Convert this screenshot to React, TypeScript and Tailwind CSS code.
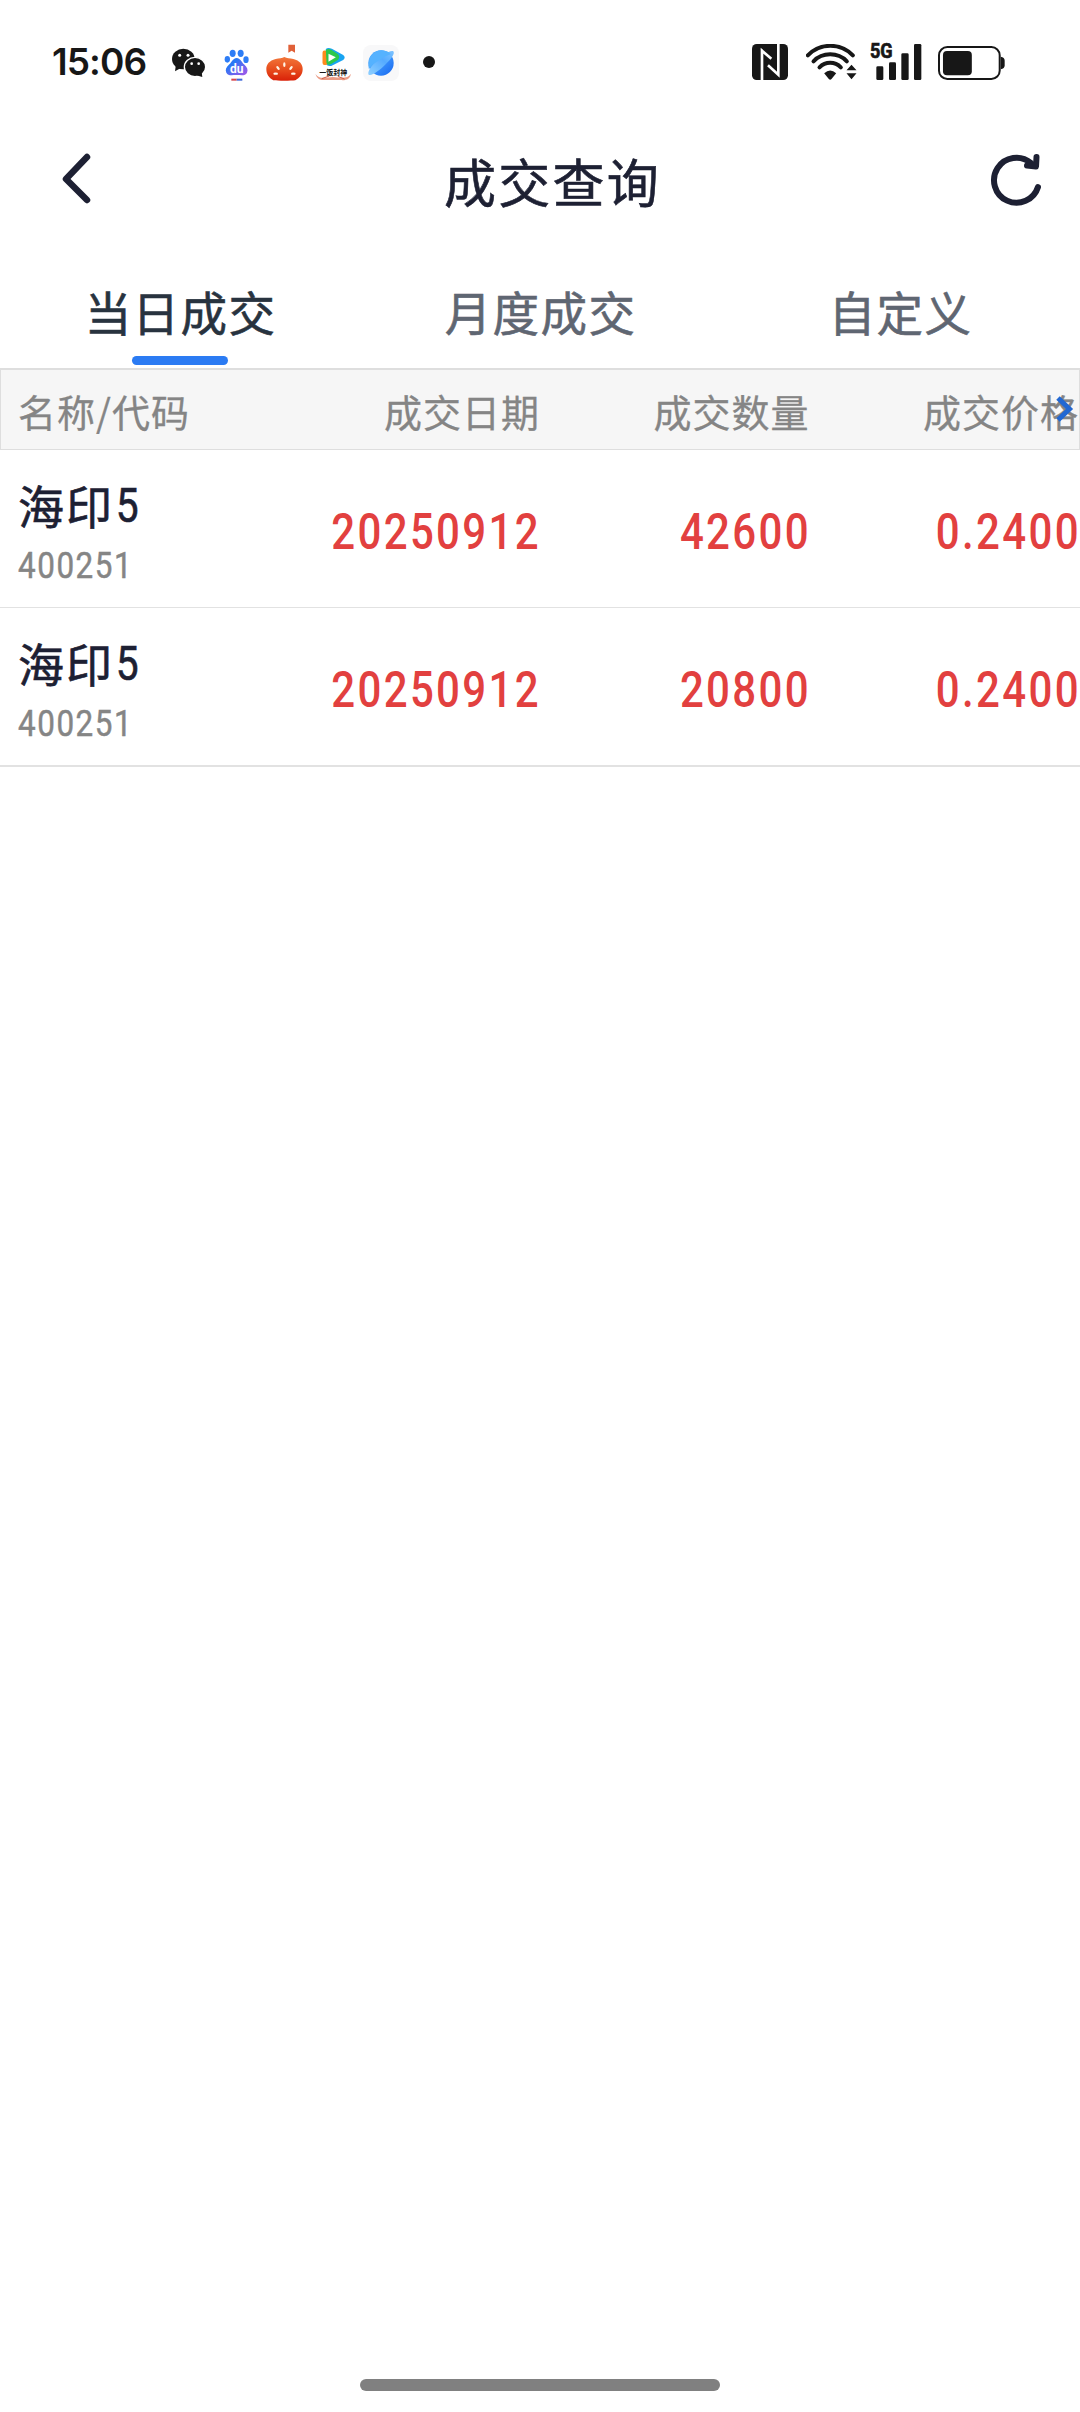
const trades = [
  { name: "海印", suffix: "5", code: "400251", date: "20250912", amount: "42600", price: "0.2400" },
  { name: "海印", suffix: "5", code: "400251", date: "20250912", amount: "20800", price: "0.2400" },
];

const tabs = ["当日成交", "月度成交", "自定义"];

function WechatIcon() {
  return (
    <svg viewBox="0 0 102 114" className="h-[38px] w-[34px]">
      <path d="M12 60L9 82L28 71Z" fill="#171717" />
      <ellipse cx="34" cy="45" rx="34" ry="31" fill="#171717" />
      <circle cx="23" cy="34" r="4.5" fill="#fff" />
      <circle cx="48" cy="34" r="4.5" fill="#fff" />
      <ellipse cx="69" cy="69" rx="32" ry="29" fill="#171717" stroke="#fff" strokeWidth="4" />
      <path d="M73 94L91 99L89 84Z" fill="#171717" />
      <circle cx="59" cy="59" r="4" fill="#fff" />
      <circle cx="80" cy="59" r="4" fill="#fff" />
    </svg>
  );
}

function BaiduIcon() {
  return (
    <svg viewBox="0 0 75 114" className="h-[38px] w-[25px]">
      <defs>
        <linearGradient id="paw" x1="0" y1="0" x2="1" y2="1">
          <stop offset="0.3" stopColor="#2878f5" />
          <stop offset="1" stopColor="#a855e8" />
        </linearGradient>
      </defs>
      <ellipse cx="10" cy="46" rx="8" ry="10" fill="#2d7df6" />
      <ellipse cx="26" cy="28" rx="9" ry="11" fill="#2d7df6" />
      <ellipse cx="50" cy="28" rx="9" ry="11" fill="#2d7df6" />
      <ellipse cx="66" cy="47" rx="8" ry="10" fill="#2d7df6" />
      <path
        d="M38 42C49 42 52 54 60 61C70 70 73 78 69 86C64 96 54 93 38 93C22 93 12 96 7 86C3 78 6 70 16 61C24 54 27 42 38 42Z"
        fill="url(#paw)"
      />
      <text x="38" y="86" textAnchor="middle" fontSize="36" fontWeight="700" fill="#fff" className="font-[Roboto]">
        du
      </text>
      <path d="M22 107H38" stroke="#d8464c" strokeWidth="6" />
      <path d="M38 107H55" stroke="#3d66d8" strokeWidth="6" />
    </svg>
  );
}

function TomatoIcon() {
  return (
    <svg viewBox="0 0 111 114" className="h-[38px] w-[37px]">
      <defs>
        <linearGradient id="fruit" x1="0" y1="0" x2="0" y2="1">
          <stop offset="0" stopColor="#f2763a" />
          <stop offset="0.5" stopColor="#e84f1e" />
          <stop offset="1" stopColor="#d92008" />
        </linearGradient>
      </defs>
      <path d="M67 2H87V26L77 20L67 26Z" fill="#e06038" />
      <path
        d="M55 39C62 44 72 42 82 45C101 50 110 61 110 75C110 92 101 101 88 109C76 111 34 111 22 109C9 101 1 92 1 75C1 61 10 50 29 45C39 42 49 44 55 39Z"
        fill="url(#fruit)"
      />
      <g fill="#fff5e6">
        <ellipse cx="55" cy="62" rx="3.5" ry="7" />
        <ellipse cx="36" cy="72" rx="3.5" ry="7" transform="rotate(-38 36 72)" />
        <ellipse cx="75" cy="72" rx="3.5" ry="7" transform="rotate(38 75 72)" />
        <ellipse cx="29" cy="89" rx="7" ry="3.5" />
        <ellipse cx="82" cy="89" rx="7" ry="3.5" />
      </g>
    </svg>
  );
}

function VideoIcon() {
  return (
    <svg viewBox="0 0 110 114" className="h-[38px] w-[37px]">
      <path d="M32 15Q38 9 50 14L84 33Q93 40 84 48L48 66Q34 68 32 58Z" fill="#18a4f2" />
      <path d="M22 26Q22 17 32 20L66 36Q72 40 66 45L34 62Q22 66 22 56Z" fill="#ff8a1c" />
      <path d="M32 18Q40 12 48 17L68 30Q76 40 68 48L48 60Q36 66 34 56Z" fill="#2cc84d" />
      <path d="M40 29L62 40L40 53Z" fill="#fff" />
      <path
        d="M1 90C10 105 26 102 54 99C80 102 98 104 107 89C106 105 92 110 76 108H31C15 110 4 103 1 90Z"
        fill="#eb9c86"
      />
      <path d="M20 104L42 96M88 105L68 97" stroke="#cf5d46" strokeWidth="3" />
      <text x="54" y="93" textAnchor="middle" fontSize="21" fontWeight="700" fill="#111" className="font-['Noto_Sans_CJK_SC']">
        一饭封神
      </text>
    </svg>
  );
}

function BrowserIcon() {
  return (
    <svg viewBox="0 0 108 114" className="h-[38px] w-[36px]">
      <defs>
        <linearGradient id="globe" x1="0" y1="0" x2="1" y2="1">
          <stop offset="0" stopColor="#55b0ff" />
          <stop offset="0.5" stopColor="#3b93fb" />
          <stop offset="1" stopColor="#1767f0" />
        </linearGradient>
        <linearGradient id="orbit" x1="0" y1="1" x2="1" y2="0">
          <stop offset="0" stopColor="#8fd0ff" />
          <stop offset="0.6" stopColor="#55abff" />
          <stop offset="1" stopColor="#7cc2ff" />
        </linearGradient>
      </defs>
      <rect y="3" width="108" height="108" rx="24" fill="#f8f8f9" />
      <circle cx="54" cy="57" r="38" fill="url(#globe)" />
      <path
        d="M17 92C13 86 20 72 34 56C50 38 82 17 91 22C97 28 84 46 68 61C50 79 25 98 17 92Z"
        fill="url(#orbit)"
      />
      <path d="M17 66C15 38 34 19 56 19C70 20 79 25 83 31C62 38 38 54 17 74Z" fill="#55b2ff" />
    </svg>
  );
}

function NfcIcon() {
  return (
    <svg viewBox="0 0 108 114" className="h-[38px] w-[36px]">
      <rect width="108" height="108" rx="14" fill="#171717" />
      <path d="M30 108V20L58 44M79 0V92L48 64" fill="none" stroke="#fff" strokeWidth="8" />
    </svg>
  );
}

function WifiIcon() {
  return (
    <svg viewBox="0 0 152 114" className="h-[38px] w-[51px]">
      <g fill="none" stroke="#171717" strokeWidth="12" strokeLinecap="round">
        <path d="M5 34C42 -4 103 -4 140 34" />
        <path d="M22 52C49 24 95 24 122 52" />
        <path d="M40 70C58 52 86 52 104 70" />
      </g>
      <path d="M54 88Q72 71 90 88L76 105Q72 109 68 105Z" fill="#171717" />
      <path d="M136 62L151 79H121ZM121 88H151L136 106Z" fill="#171717" />
    </svg>
  );
}

function SignalIcon() {
  return (
    <svg viewBox="0 0 156 114" className="h-[38px] w-[52px] overflow-visible">
      <text
        x="0"
        y="42"
        fontSize="61"
        fontWeight="700"
        textLength="68"
        lengthAdjust="spacingAndGlyphs"
        fill="#171717"
        stroke="#171717"
        strokeWidth="2"
        className="font-[Roboto]"
      >
        5G
      </text>
      <g fill="#171717">
        <rect x="19" y="67" width="21" height="41" rx="4" />
        <rect x="57" y="55" width="21" height="53" rx="4" />
        <rect x="94" y="28" width="22" height="80" rx="4" />
        <rect x="132" y="0" width="22" height="108" rx="4" />
      </g>
    </svg>
  );
}

function BatteryIcon() {
  return (
    <svg viewBox="0 0 202 114" className="h-[38px] w-[67px]">
      <rect x="3" y="9" width="183" height="96" rx="25" fill="none" stroke="#171717" strokeWidth="6" />
      <rect x="15" y="21" width="87" height="73" rx="12" fill="#171717" />
      <path d="M189 38Q201 40 201 50V64Q201 74 189 76Z" fill="#171717" />
    </svg>
  );
}

function StatusBar() {
  return (
    <div className="flex h-[124px] items-start pt-11 pr-[75px] pl-[52px]">
      <span className="h-[38px] w-[120px] font-[Inter] text-[37px] leading-[36px] font-semibold tracking-[-0.9px] text-[#171717]">
        15:06
      </span>
      <WechatIcon />
      <div className="ml-[18px] flex">
        <BaiduIcon />
      </div>
      <div className="ml-[17px] flex">
        <TomatoIcon />
      </div>
      <div className="ml-3 flex">
        <VideoIcon />
      </div>
      <div className="ml-[11px] flex">
        <BrowserIcon />
      </div>
      <span className="mt-3 ml-6 size-3 rounded-full bg-[#171717]" />
      <div className="ml-auto flex">
        <NfcIcon />
        <div className="ml-[18px] flex">
          <WifiIcon />
        </div>
        <div className="ml-[13px] flex">
          <SignalIcon />
        </div>
        <div className="ml-4 flex">
          <BatteryIcon />
        </div>
      </div>
    </div>
  );
}

function Header() {
  return (
    <header className="flex h-[122px] items-start justify-between pr-[37px] pl-[60px] text-[#1d2033]">
      <svg viewBox="0 0 34 56" className="mt-[27px] h-14 w-[34px]" fill="none" stroke="currentColor" strokeWidth="6.5" strokeLinecap="round" strokeLinejoin="round">
        <path d="M27 6L6 28L27 49" />
      </svg>
      <h1 className="pt-[18px] pl-[24px] text-[52px] leading-[78px] font-normal tracking-[2.2px] [-webkit-text-stroke:0.6px]">
        成交查询
      </h1>
      <svg viewBox="0 0 56 56" className="mt-[27px] h-14 w-14" fill="none" stroke="currentColor" strokeWidth="6" strokeLinecap="round" strokeLinejoin="round">
        <path d="M51 36A22.500 22.500 0 1 1 44 12" />
        <path d="M40 14.500L49 15.500L49.500 6" />
      </svg>
    </header>
  );
}

function Tabs() {
  return (
    <nav className="grid h-[122px] grid-cols-3 text-[46.500px] font-normal tracking-[1.4px] [-webkit-text-stroke:0.6px]">
      {tabs.map((tab, i) => (
        <button
          key={tab}
          className={i === 0 ? "flex flex-col items-center text-[#28333f]" : "flex flex-col items-center text-[#5f6672]"}
        >
          <span className="mt-[31px] pl-px leading-[68px]">{tab}</span>
          {i === 0 && <span className="mt-[11px] h-[9px] w-24 rounded-full bg-[#2b7bf3]" />}
        </button>
      ))}
    </nav>
  );
}

function Num({ children }: { children: string }) {
  return (
    <span className="-mr-px block origin-right scale-x-[0.84] text-right font-[Roboto] text-[50px] leading-[61px] font-medium tracking-[2.8px] text-[#e2403f]">
      {children}
    </span>
  );
}

export default function App() {
  return (
    <div className="flex h-[2412px] w-[1080px] flex-col overflow-hidden bg-white font-['Noto_Sans_CJK_SC',sans-serif]">
      <StatusBar />
      <Header />
      <Tabs />

      <div className="relative grid h-[82px] grid-cols-4 border border-t-2 border-[#dedede] bg-[#f6f6f6] text-right text-[38px] leading-[81px] tracking-[1px] whitespace-nowrap text-[#858585] [-webkit-text-stroke:0.3px]">
        <span className="pl-[17px] text-left">名称/代码</span>
        <span>成交日期</span>
        <span>成交数量</span>
        <span>成交价格</span>
        <svg viewBox="0 0 18 28" className="absolute top-[25px] right-[5px] h-7 w-[18px]" fill="none" stroke="#2268d2" strokeWidth="5">
          <path d="M2 3L13.500 14L2 25" />
        </svg>
      </div>

      {trades.map((t, i) => (
        <div
          key={i}
          className={
            i === trades.length - 1
              ? "grid h-[159px] grid-cols-4 border-b-2 border-[#e2e2e2]"
              : "grid h-[158px] grid-cols-4 border-b border-[#e2e2e2]"
          }
        >
          <div className="pl-[18px]">
            <div className="mt-[20px] flex h-[68px] items-center text-[46px] leading-[68px] font-normal tracking-[2px] text-[#1d2033] [-webkit-text-stroke:0.6px]">
              {t.name}
              <span className="mt-[3px] origin-left scale-x-[0.85] pl-0.5 font-[Roboto] text-[48px]">{t.suffix}</span>
            </div>
            <div className="mt-[4px] origin-left scale-x-[0.86] font-[Roboto] text-[36.500px] leading-[48px] tracking-[1.800px] text-[#858585] [-webkit-text-stroke:0.5px]">
              {t.code}
            </div>
          </div>
          <div className="pt-[52px]">
            <Num>{t.date}</Num>
          </div>
          <div className="pt-[52px]">
            <Num>{t.amount}</Num>
          </div>
          <div className="pt-[52px]">
            <Num>{t.price}</Num>
          </div>
        </div>
      ))}

      <div className="mx-auto mt-auto mb-[21px] h-3 w-[360px] rounded-full bg-[#808080]" />
    </div>
  );
}
